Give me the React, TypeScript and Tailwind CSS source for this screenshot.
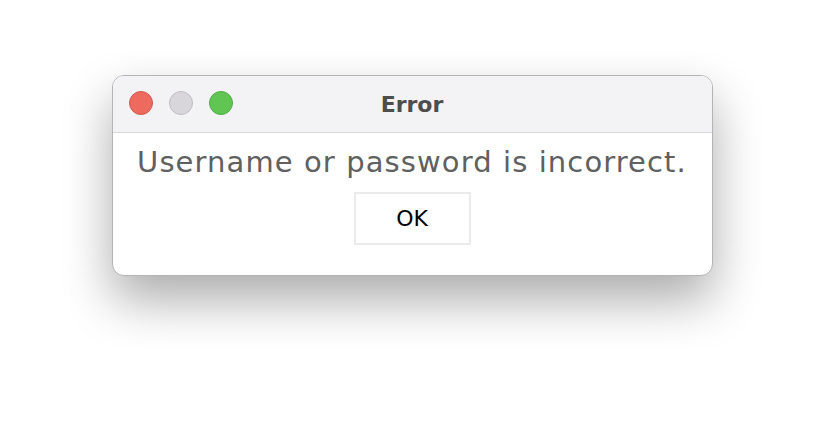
export default function App() {
  return (
    <div className="w-[824px] h-[424px] bg-white flex justify-center pt-[75px]">
      <div className="w-[601px] h-[201px] rounded-[12px] border border-[#b4b4b4] bg-white overflow-hidden shadow-[0_24px_50px_rgba(0,0,0,0.33)] flex flex-col">
        {/* Title bar */}
        <div className="relative h-[57px] shrink-0 bg-[#f3f2f5] border-b border-[#d9d9d9] flex items-center justify-center">
          <div className="absolute left-[16px] top-[15px] flex gap-[16px]">
            <span className="w-[24px] h-[24px] rounded-full bg-[#ee6a5f] border border-[#d3574c]" />
            <span className="w-[24px] h-[24px] rounded-full bg-[#d8d6da] border border-[#c0bec2]" />
            <span className="w-[24px] h-[24px] rounded-full bg-[#61c554] border border-[#4ead42]" />
          </div>
          <span className="text-[22px] font-bold text-[#4d4d4d] font-['DejaVu_Sans',sans-serif]">
            Error
          </span>
        </div>
        {/* Body */}
        <div className="flex-1 flex flex-col items-center pt-[11px]">
          <p className="text-[29px] leading-[36px] tracking-[1.1px] text-[#606060] font-['DejaVu_Sans',sans-serif]">
            Username or password is incorrect.
          </p>
          <button className="mt-[12px] w-[117px] h-[53px] border-2 border-[#ebebeb] bg-white text-[22px] text-black font-['DejaVu_Sans',sans-serif]">
            OK
          </button>
        </div>
      </div>
    </div>
  );
}
